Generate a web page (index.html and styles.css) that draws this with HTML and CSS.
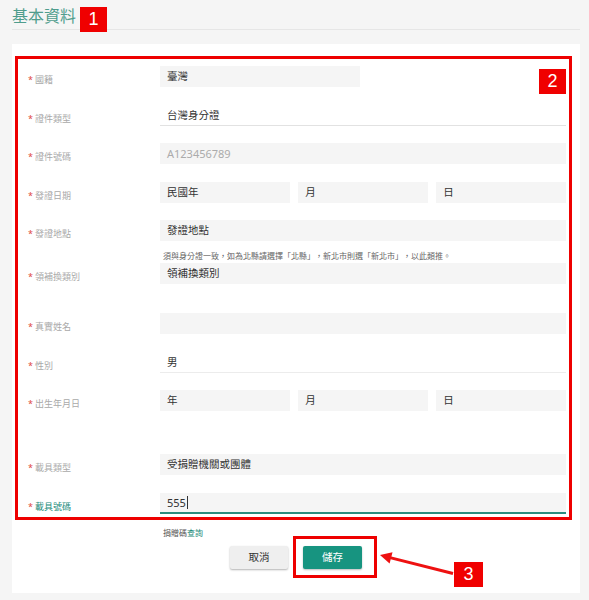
FILE: index.html
```html
<!DOCTYPE html>
<html lang="zh-Hant">
<head>
<meta charset="utf-8">
<title>基本資料</title>
<link rel="stylesheet" href="styles.css">
</head>
<body>
<header class="head">
  <h1 class="title">基本資料</h1>
  <span class="badge badge-1">1</span>
</header>

<section class="card">
  <div class="frame">
    <span class="badge badge-2">2</span>

    <div class="row">
      <label class="lbl"><i>*</i>國籍</label>
      <div class="field"><div class="inp short">臺灣</div></div>
    </div>

    <div class="row">
      <label class="lbl"><i>*</i>證件類型</label>
      <div class="field"><div class="sel">台灣身分證</div></div>
    </div>

    <div class="row">
      <label class="lbl"><i>*</i>證件號碼</label>
      <div class="field"><div class="inp ph">A123456789</div></div>
    </div>

    <div class="row">
      <label class="lbl"><i>*</i>發證日期</label>
      <div class="field triple">
        <div class="inp">民國年</div>
        <div class="inp">月</div>
        <div class="inp">日</div>
      </div>
    </div>

    <div class="row">
      <label class="lbl"><i>*</i>發證地點</label>
      <div class="field"><div class="inp">發證地點</div></div>
    </div>

    <div class="hint">須與身分證一致，如為北縣請選擇「北縣」，新北市則選「新北市」，以此類推。</div>

    <div class="row after-hint">
      <label class="lbl"><i>*</i>領補換類別</label>
      <div class="field"><div class="inp">領補換類別</div></div>
    </div>

    <div class="row gap-m">
      <label class="lbl"><i>*</i>真實姓名</label>
      <div class="field"><div class="inp"></div></div>
    </div>

    <div class="row">
      <label class="lbl"><i>*</i>性別</label>
      <div class="field"><div class="sel light">男</div></div>
    </div>

    <div class="row">
      <label class="lbl"><i>*</i>出生年月日</label>
      <div class="field triple">
        <div class="inp">年</div>
        <div class="inp">月</div>
        <div class="inp">日</div>
      </div>
    </div>

    <div class="row gap-l">
      <label class="lbl"><i>*</i>載具類型</label>
      <div class="field"><div class="inp">受捐贈機關或團體</div></div>
    </div>

    <div class="row">
      <label class="lbl active"><i>*</i>載具號碼</label>
      <div class="field"><div class="inp focus">555<span class="caret"></span></div></div>
    </div>
  </div>

  <p class="donate">捐贈碼<a class="link">查詢</a></p>

  <div class="actions">
    <button class="btn cancel">取消</button>
    <button class="btn save">儲存<span class="mark"></span></button>
    <svg class="arrow" width="78" height="30" viewBox="0 0 78 30">
      <line x1="11" y1="9.4" x2="75" y2="25.5" stroke="#ee1111" stroke-width="3"/>
      <polygon points="2,7 14.5,4.2 11.6,15.4" fill="#ee1111"/>
    </svg>
    <span class="badge badge-3">3</span>
  </div>
</section>
</body>
</html>
```

FILE: styles.css
```css
* { box-sizing: border-box; }

html, body {
  margin: 0;
  padding: 0;
}

body {
  background: #f5f5f5;
  font-family: "Noto Sans", "Noto Sans CJK TC", sans-serif;
  width: 589px;
  height: 600px;
  overflow: hidden;
}

.head {
  position: relative;
  margin: 0 9px 0 12px;
  padding-top: 6px;
  height: 30px;
  border-bottom: 1px solid #e6e6e6;
}

.title {
  margin: 0;
  font-size: 16px;
  line-height: 20px;
  font-weight: normal;
  color: #4f9d8d;
}

.badge {
  position: absolute;
  width: 27px;
  height: 25px;
  background: #f00000;
  color: #fff;
  font-family: "Liberation Sans", sans-serif;
  font-size: 18px;
  line-height: 25px;
  text-align: center;
}

.badge-1 { left: 68px; top: 7px; }
.badge-2 { left: 521px; top: 10px; }
.badge-3 { left: 442px; top: 16px; width: 29px; }

.card {
  margin: 14px 9px 0 12px;
  background: #fff;
  padding: 12px 0 24px 0;
}

.frame {
  position: relative;
  margin-left: 3px;
  width: 557px;
  border: 3px solid #ee0000;
  padding: 7px 3px 3px 0;
}

.row {
  display: flex;
  height: 21px;
}

.row + .row { margin-top: 17.5px; }
.row.after-hint { margin-top: 2px; }
.row.gap-m { margin-top: 29px; }
.row.gap-l { margin-top: 43px; }

.lbl {
  width: 142px;
  flex: none;
  padding: 9px 0 0 10px;
  font-size: 9px;
  line-height: 10px;
  color: #a9a9a9;
  white-space: nowrap;
}

.lbl i {
  font-style: normal;
  color: #e0473f;
  margin-right: 2px;
}

.lbl.active { color: #238a7a; }

.field {
  flex: 1;
}

.field.triple {
  display: grid;
  grid-template-columns: repeat(3, 1fr);
  column-gap: 8.5px;
}

.inp {
  height: 21px;
  background: #f5f5f5;
  padding-left: 7px;
  font-size: 10.5px;
  line-height: 21px;
  color: #333;
  white-space: nowrap;
}

.inp.short { width: 200px; }
.inp.ph { color: #ababab; font-size: 11px; }

.inp.focus {
  border-bottom: 2px solid #2a8c7f;
  line-height: 20px;
  font-size: 11px;
}

.caret {
  display: inline-block;
  width: 1px;
  height: 13px;
  background: #333;
  margin-left: 1px;
  vertical-align: -2px;
}

.sel {
  height: 21px;
  padding: 1px 0 0 7px;
  border-bottom: 1px solid #e2e2e2;
  font-size: 10.5px;
  line-height: 19px;
  color: #333;
}

.sel.light { border-bottom-color: #ececec; }

.hint {
  margin: 10px 0 0 145px;
  font-size: 8px;
  line-height: 10px;
  color: #666;
  white-space: nowrap;
}

.donate {
  margin: 8px 0 0 151px;
  font-size: 8px;
  line-height: 10px;
  color: #555;
}

.link { color: #1f8c7c; }

.actions {
  position: relative;
  margin-top: 8px;
  display: flex;
  justify-content: center;
  gap: 15px;
}

.btn {
  position: relative;
  width: 58px;
  height: 23px;
  border: none;
  border-radius: 2px;
  font-family: "Noto Sans", "Noto Sans CJK TC", sans-serif;
  font-size: 10.5px;
  line-height: 23px;
  padding: 0;
}

.cancel {
  background: #efefef;
  color: #333;
  box-shadow: 0 1px 2px rgba(0, 0, 0, 0.3);
}

.save {
  width: 59px;
  background: #179480;
  color: #fff;
  box-shadow: 0 1px 2px rgba(0, 0, 0, 0.25);
}

.mark {
  position: absolute;
  left: -10px;
  top: -10px;
  width: 84px;
  height: 42px;
  border: 3px solid #ee0000;
}

.arrow {
  position: absolute;
  left: 366px;
  top: 2px;
}
```
